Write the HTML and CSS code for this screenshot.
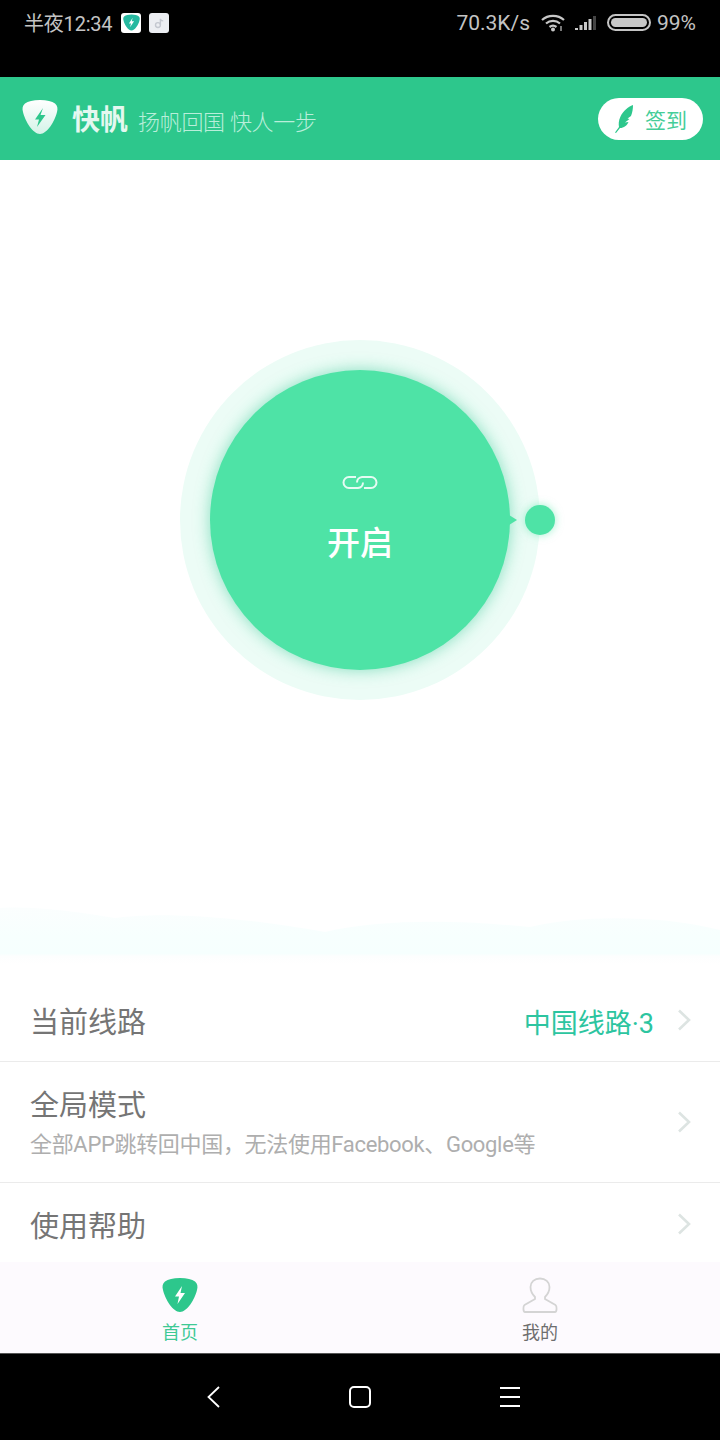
FILE: index.html
```html
<!DOCTYPE html>
<html lang="zh">
  <head>
    <meta charset="utf-8">
    <title>快帆</title>
    <link rel="stylesheet" href="styles.css">
  </head>
  <body>
    <div class="phone">
      <div class="statusbar">
        <div class="status-left">
          <span class="status-time">半夜12:34</span>
          <span class="note-icon">
            <svg viewBox="0 0 36 36" width="17" height="17"><path d="M18 1C25 1 30 2.500 33 4.500C35.500 6.500 36 9.500 35 13C33 22 25 35 18 35C11 35 3 22 1 13C0 9.500 0.500 6.500 3 4.500C6 2.500 11 1 18 1Z" fill="#26b9a0"/><path d="M20.500 8L12.500 20H17L15 28L23.500 15.500H18.500Z" fill="#fff"/></svg>
          </span>
          <span class="note-icon note-grey">
            <svg viewBox="0 0 20 20" width="14" height="14"><circle cx="8.500" cy="13" r="3.500" fill="none" stroke="#c4c8d0" stroke-width="2"/><path d="M12 13V4C12.500 6 14 7 16 7" fill="none" stroke="#c4c8d0" stroke-width="2"/></svg>
          </span>
        </div>
        <div class="status-right">
          <span>70.3K/s</span>
          <svg class="wifi" viewBox="0 0 25 18" width="25" height="18" fill="none" stroke="#c8c8c8" stroke-width="2.200"><path d="M1 6C7 0.500 17 0.500 23 6"/><path d="M5 9.500C9 6 15 6 19 9.500"/><path d="M8.500 13C10.500 11.500 13.500 11.500 15.500 13"/><circle cx="12" cy="15.500" r="2" fill="#c8c8c8" stroke="none"/><path d="M20 12V17" stroke="#777" stroke-width="2"/></svg>
          <svg class="signal" viewBox="0 0 22 14" width="22" height="14" fill="#c8c8c8"><rect x="0" y="12" width="3" height="2"/><rect x="4.500" y="9" width="3" height="5"/><rect x="9" y="6" width="3" height="8"/><rect x="13.500" y="3" width="3" height="11"/><rect x="18" y="0" width="3" height="14" fill="#444"/></svg>
          <span class="battery"><span class="battery-fill"></span></span>
          <span class="battery-num">99%</span>
        </div>
      </div>

      <header class="topbar">
        <div class="brand">
          <svg class="brand-logo" viewBox="0 0 36 36" width="36" height="36"><defs><linearGradient id="shieldGrad" x1="0" y1="0" x2="0" y2="1"><stop offset="0" stop-color="#fff"/><stop offset="1" stop-color="#d4f3e8"/></linearGradient></defs><path d="M18 1C25 1 30 2.500 33 4.500C35.500 6.500 36 9.500 35 13C33 22 25 35 18 35C11 35 3 22 1 13C0 9.500 0.500 6.500 3 4.500C6 2.500 11 1 18 1Z" fill="url(#shieldGrad)"/><path d="M21 9L13 20.500H17L15 28L23.500 16H18.500Z" fill="#2dc78c"/></svg>
          <span class="brand-name">快帆</span>
          <span class="brand-slogan">扬帆回国 快人一步</span>
        </div>
        <div class="sign-btn">
          <svg viewBox="0 0 18 28" width="18" height="28"><path d="M18 0C13 2 8 6 5.500 11.500C3.500 16 3.500 19 4 22L0 27.500L1 28L5 23C9 23 12 20.500 13.500 17L10 17.500L14.500 14L12.500 13.500L16 11C17.500 7.500 18 3.500 18 0Z" fill="#2dc78c"/></svg>
          <span>签到</span>
        </div>
      </header>

      <main class="home">
        <section class="dial">
          <div class="halo">
            <div class="circle">
              <svg viewBox="0 0 36 13" width="36" height="13" fill="none" stroke="#e6fbf3" stroke-width="2"><path d="M14 1H7A5.500 5.500 0 0 0 7 12H16A5.500 5.500 0 0 0 21 6.500"/><path d="M22 12H29A5.500 5.500 0 0 0 29 1H20A5.500 5.500 0 0 0 15 6.500"/></svg>
              <span class="circle-text">开启</span>
            </div>
            <span class="knob-tip"></span>
            <span class="knob"></span>
          </div>
        </section>

        <svg class="wave" viewBox="0 0 720 70" width="720" height="70" preserveAspectRatio="none"><defs><linearGradient id="waveGrad" x1="0" y1="0" x2="0" y2="1"><stop offset="0" stop-color="#fbfefe"/><stop offset="0.500" stop-color="#f7fffe"/><stop offset="0.800" stop-color="#f6fffe"/><stop offset="0.850" stop-color="#fdfefe"/><stop offset="1" stop-color="#fff"/></linearGradient></defs><path d="M0 13C40 11 75 17 115 23C155 17 230 20 325 37C375 25 450 24 530 32C580 20 660 20 720 35V70H0Z" fill="url(#waveGrad)"/></svg>

        <ul class="menu">
          <li class="menu-row row-route">
            <span class="menu-title">当前线路</span>
            <span class="menu-value">中国线路·3</span>
            <svg class="chev" viewBox="0 0 14 22" width="14" height="22"><path d="M2 1.500L12 11L2 20.500" fill="none" stroke="#dde4e2" stroke-width="2.600"/></svg>
          </li>
          <li class="menu-row row-mode">
            <div class="menu-col">
              <span class="menu-title">全局模式</span>
              <span class="menu-sub">全部APP跳转回中国，无法使用Facebook、Google等</span>
            </div>
            <svg class="chev" viewBox="0 0 14 22" width="14" height="22"><path d="M2 1.500L12 11L2 20.500" fill="none" stroke="#dde4e2" stroke-width="2.600"/></svg>
          </li>
          <li class="menu-row row-help">
            <span class="menu-title">使用帮助</span>
            <svg class="chev" viewBox="0 0 14 22" width="14" height="22"><path d="M2 1.500L12 11L2 20.500" fill="none" stroke="#dde4e2" stroke-width="2.600"/></svg>
          </li>
        </ul>
      </main>

      <nav class="tabbar">
        <div class="tab tab-on">
          <svg viewBox="0 0 36 36" width="36" height="36"><path d="M18 1C25 1 30 2.500 33 4.500C35.500 6.500 36 9.500 35 13C33 22 25 35 18 35C11 35 3 22 1 13C0 9.500 0.500 6.500 3 4.500C6 2.500 11 1 18 1Z" fill="#2dc78c"/><path d="M20 9L13 19.500H17L15.500 27L23 16H18.500Z" fill="#fff"/></svg>
          <span>首页</span>
        </div>
        <div class="tab">
          <svg viewBox="0 0 36 36" width="36" height="36" fill="none" stroke="#d4d4d4" stroke-width="1.800"><path d="M13 20C10 17 8.500 14 8.500 10C8.500 5 12.500 1.500 18 1.500C23.500 1.500 27.500 5 27.500 10C27.500 14 26 17 23 20V22L33.500 28C35 29 35 35 33 35H3C1 35 1 29 2.500 28L13 22Z"/></svg>
          <span>我的</span>
        </div>
      </nav>

      <div class="navbar">
        <svg viewBox="0 0 13 22" width="13" height="22" fill="none" stroke="#fff" stroke-width="1.800"><path d="M12 1L1.500 11L12 21"/></svg>
        <svg viewBox="0 0 22 22" width="22" height="22" fill="none" stroke="#fff" stroke-width="2"><rect x="1" y="1" width="20" height="20" rx="4"/></svg>
        <svg viewBox="0 0 20 20" width="20" height="20" fill="none" stroke="#fff" stroke-width="1.800"><path d="M0 1H20M0 10H20M0 19H20"/></svg>
      </div>
    </div>
  </body>
</html>
```

FILE: styles.css
```css
* {
  box-sizing: border-box;
}
html, body {
  margin: 0;
  padding: 0;
}
body {
  font-family: "Roboto", "Noto Sans CJK SC", sans-serif;
  background: #000;
}
.phone {
  width: 720px;
  height: 1440px;
  display: flex;
  flex-direction: column;
  overflow: hidden;
  background: #fff;
}

/* status bar */
.statusbar {
  height: 77px;
  flex: none;
  background: #000;
  color: #c4c4c4;
  font-size: 21px;
  padding: 0 24px 32px;
  display: flex;
  justify-content: space-between;
  align-items: center;
}
.status-left {
  display: flex;
  align-items: center;
}
.status-time {
  font-size: 20px;
  letter-spacing: -0.2px;
}
.status-right {
  display: flex;
  align-items: center;
}
.note-icon {
  width: 20px;
  height: 20px;
  border-radius: 3px;
  background: #fff;
  margin-left: 9px;
  display: flex;
  align-items: center;
  justify-content: center;
}
.note-grey {
  background: #eceef2;
  margin-left: 8px;
}
.wifi {
  margin-left: 11px;
}
.signal {
  margin-left: 9px;
}
.battery {
  width: 44px;
  height: 17px;
  margin-left: 10px;
  border: 2px solid #c4c4c4;
  border-radius: 9px;
  padding: 2px;
  display: block;
}
.battery-fill {
  display: block;
  height: 100%;
  background: #c8c8c8;
  border-radius: 5px;
}
.battery-num {
  margin-left: 6px;
}

/* top bar */
.topbar {
  height: 83px;
  flex: none;
  background: #2dc78c;
  padding: 0 17px 0 22px;
  display: flex;
  align-items: center;
  justify-content: space-between;
}
.brand {
  display: flex;
  align-items: center;
  color: #e4f8f0;
}
.brand-logo {
  margin-top: -4px;
}
.brand-name {
  margin-left: 14px;
  margin-top: -2px;
  font-size: 28px;
  font-weight: 700;
}
.brand-slogan {
  margin-left: 10px;
  margin-top: 3px;
  font-size: 22px;
  letter-spacing: -0.3px;
  font-weight: 300;
  color: #b9eeda;
}
.sign-btn {
  width: 105px;
  height: 42px;
  border-radius: 21px;
  background: #fff;
  color: #45cd98;
  font-size: 21px;
  display: flex;
  align-items: center;
  padding-left: 17px;
  gap: 12px;
}

/* main */
.home {
  flex: 1;
  display: flex;
  flex-direction: column;
  min-height: 0;
}
.dial {
  height: 360px;
  margin-top: 180px;
  display: flex;
  justify-content: center;
}
.halo {
  position: relative;
  width: 360px;
  height: 360px;
  border-radius: 50%;
  background: #ecfcf6;
  display: flex;
  align-items: center;
  justify-content: center;
}
.circle {
  width: 300px;
  height: 300px;
  border-radius: 50%;
  background: #4ee3a6;
  box-shadow: 0 0 16px rgba(50, 200, 145, 0.55);
  color: #fff;
  display: flex;
  flex-direction: column;
  align-items: center;
  padding-top: 106px;
}
.circle-text {
  margin-top: 32px;
  font-size: 33px;
  font-weight: 500;
  line-height: 46px;
}
.knob {
  position: absolute;
  left: 345px;
  top: 165px;
  width: 30px;
  height: 30px;
  border-radius: 50%;
  background: #4ee3a6;
  box-shadow: 0 0 8px rgba(78, 227, 166, 0.55);
}
.knob-tip {
  position: absolute;
  left: 329px;
  top: 175px;
  border-left: 8px solid #4ee3a6;
  border-top: 5px solid transparent;
  border-bottom: 5px solid transparent;
}
.wave {
  display: block;
  margin-top: 195px;
  flex: none;
}
.menu {
  list-style: none;
  margin: 0;
  padding: 0;
}
.menu-row {
  display: flex;
  align-items: center;
  padding: 0 29px 0 30px;
}
.row-route {
  height: 97px;
  border-bottom: 1px solid #ebebeb;
  padding-top: 20px;
}
.row-mode {
  height: 121px;
  border-bottom: 1px solid #ebebeb;
}
.row-help {
  height: 79px;
  padding-top: 8px;
}
.menu-title {
  font-size: 29px;
  color: #757575;
  line-height: 40px;
}
.menu-col {
  display: flex;
  flex-direction: column;
  gap: 5px;
}
.menu-sub {
  font-size: 22px;
  letter-spacing: -0.32px;
  color: #aeaeae;
  line-height: 28px;
}
.menu-value {
  margin-left: auto;
  margin-top: -3px;
  font-size: 27px;
  color: #2cc5a0;
}
.chev {
  margin-left: auto;
  flex: none;
}
.row-route .chev {
  margin-left: 23px;
  margin-top: -6px;
}
.row-help .chev {
  margin-top: -6px;
}

/* tabs */
.tabbar {
  height: 92px;
  flex: none;
  background: #fdfafe;
  display: flex;
  border-bottom: 1px solid #555;
}
.tab {
  flex: 1;
  display: flex;
  flex-direction: column;
  align-items: center;
  padding-top: 15px;
  font-size: 18px;
  color: #6e6e6e;
}
.tab span {
  line-height: 26px;
  margin-top: 7px;
}
.tab-on {
  color: #3ec995;
}

/* nav */
.navbar {
  height: 86px;
  flex: none;
  background: #000;
  display: flex;
  align-items: center;
  padding-left: 207px;
  gap: 129px;
}
```
